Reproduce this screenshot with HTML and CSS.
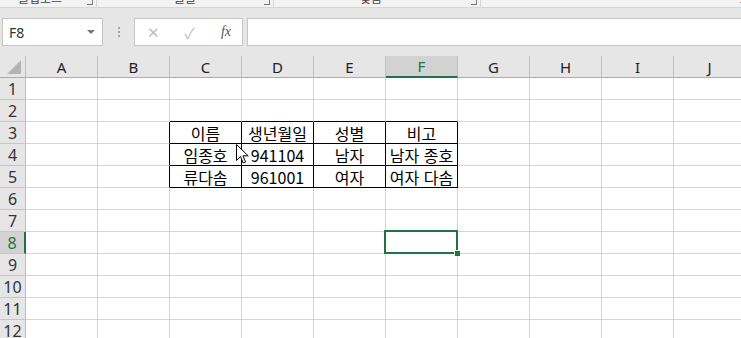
FILE: index.html
```html
<!DOCTYPE html>
<html lang="ko">
<head>
<meta charset="UTF-8">
<title>Excel - Sheet1</title>
<link rel="stylesheet" href="styles.css">
</head>
<body>

<!-- ribbon group labels (cut off at the top of the capture) -->
<div class="ribbon">
    <div class="group g-clip"><span class="glabel">클립보드</span><span class="launch"></span></div>
    <div class="group g-font"><span class="glabel">글꼴</span><span class="launch"></span></div>
    <div class="group g-align"><span class="glabel">맞춤</span><span class="launch"></span></div>
    <div class="group g-num"><span class="glabel">표시 형식</span></div>
</div>

<!-- name box + formula bar -->
<div class="formula-row">
    <div class="namebox">
        <span>F8</span>
        <span class="drop"></span>
    </div>
    <div class="grip"><i></i><i></i><i></i></div>
    <div class="fbuttons">
        <span class="fbtn cancel">✕</span>
        <span class="fbtn ok">✓</span>
        <span class="fbtn fx">fx</span>
    </div>
    <div class="finput"></div>
</div>

<div class="sheet">
    <div class="corner"><span class="tri"></span></div>
    <div class="ch">A</div><div class="ch">B</div><div class="ch">C</div><div class="ch">D</div><div class="ch">E</div>
    <div class="ch sel">F</div><div class="ch">G</div><div class="ch">H</div><div class="ch">I</div><div class="ch">J</div>

    <div class="rh">1</div>
    <div></div><div></div><div></div><div></div><div></div><div></div><div></div><div></div><div></div><div></div>

    <div class="rh">2</div>
    <div></div><div></div><div class="bk-b"></div><div class="bk-b"></div><div class="bk-b"></div><div class="bk-b"></div><div></div><div></div><div></div><div></div>

    <div class="rh">3</div>
    <div></div><div class="bk-r"></div>
    <div class="bk-r bk-b">이름</div><div class="bk-r bk-b">생년월일</div><div class="bk-r bk-b">성별</div><div class="bk-r bk-b">비고</div>
    <div></div><div></div><div></div><div></div>

    <div class="rh">4</div>
    <div></div><div class="bk-r"></div>
    <div class="bk-r bk-b">임종호</div><div class="bk-r bk-b">941104</div><div class="bk-r bk-b">남자</div><div class="bk-r bk-b">남자 종호</div>
    <div></div><div></div><div></div><div></div>

    <div class="rh">5</div>
    <div></div><div class="bk-r"></div>
    <div class="bk-r bk-b">류다솜</div><div class="bk-r bk-b">961001</div><div class="bk-r bk-b">여자</div><div class="bk-r bk-b">여자 다솜</div>
    <div></div><div></div><div></div><div></div>

    <div class="rh">6</div>
    <div></div><div></div><div></div><div></div><div></div><div></div><div></div><div></div><div></div><div></div>

    <div class="rh">7</div>
    <div></div><div></div><div></div><div></div><div></div><div></div><div></div><div></div><div></div><div></div>

    <div class="rh sel">8</div>
    <div></div><div></div><div></div><div></div><div></div>
    <div class="active"><span class="cursor-box"><span class="handle"></span></span></div>
    <div></div><div></div><div></div><div></div>

    <div class="rh">9</div>
    <div></div><div></div><div></div><div></div><div></div><div></div><div></div><div></div><div></div><div></div>

    <div class="rh">10</div>
    <div></div><div></div><div></div><div></div><div></div><div></div><div></div><div></div><div></div><div></div>

    <div class="rh">11</div>
    <div></div><div></div><div></div><div></div><div></div><div></div><div></div><div></div><div></div><div></div>

    <div class="rh">12</div>
    <div></div><div></div><div></div><div></div><div></div><div></div><div></div><div></div><div></div><div></div>

    <!-- mouse pointer -->
    <svg class="pointer" width="13" height="21" viewBox="0 0 13 21">
        <path d="M0.5 0.5 L0.5 16.5 L4.5 12.5 L7.2 19 L9.6 18 L7 11.8 L12.2 11.8 Z" fill="#fff" stroke="#000" stroke-width="1"/>
    </svg>
</div>

</body>
</html>
```

FILE: styles.css
```css
body {
    margin: 0;
    width: 741px;
    height: 338px;
    overflow: hidden;
    background-color: #e6e6e6;
    font-family: "Noto Sans", "Noto Sans CJK KR", sans-serif;
}

/* ribbon strip */
.ribbon {
    display: flex;
    height: 7px;
    overflow: hidden;
    background-color: #f3f3f3;
    border-bottom: 1px solid #d5d5d5;
}
.group {
    position: relative;
    display: flex;
    justify-content: center;
    border-right: 1px solid #d5d5d5;
    height: 7px;
}
.g-clip { width: 97px; padding-right: 16px; box-sizing: border-box; }
.g-font { width: 176px; }
.g-align { width: 207px; padding-right: 12px; box-sizing: border-box; }
.g-num { flex: 1; border-right: none; justify-content: flex-end; }
.glabel {
    font-family: "Noto Sans CJK KR", sans-serif;
    font-size: 12px;
    line-height: 16px;
    margin-top: -10px;
    color: #444;
    white-space: nowrap;
}
.g-num .glabel { margin-right: -46px; }
.launch {
    position: absolute;
    right: 3px;
    top: 0;
    width: 5px;
    height: 4px;
    border-right: 1px solid #777;
    border-bottom: 1px solid #777;
}

/* formula bar */
.formula-row {
    display: flex;
    align-items: center;
    height: 28px;
    padding: 10px 0 10px 2px;
}
.namebox {
    display: flex;
    align-items: center;
    justify-content: space-between;
    padding: 0 7px 0 6px;
    box-sizing: border-box;
    width: 101px;
    height: 28px;
    background-color: #fff;
    border: 1px solid #c6c6c6;
    font-size: 14px;
    color: #333;
}
.drop {
    width: 0;
    height: 0;
    border-left: 4px solid transparent;
    border-right: 4px solid transparent;
    border-top: 4px solid #777;
}
.grip {
    width: 31px;
    display: flex;
    flex-direction: column;
    align-items: center;
    gap: 2px;
}
.grip i {
    width: 2px;
    height: 2px;
    background-color: #a6a6a6;
}
.fbuttons {
    width: 109px;
    height: 28px;
    box-sizing: border-box;
    background-color: #fff;
    border: 1px solid #c6c6c6;
    display: flex;
    align-items: center;
    justify-content: space-between;
    padding: 0 10px 0 12px;
}
.fbtn {
    width: 12px;
    text-align: center;
    font-size: 15px;
    color: #bdbdbd;
}
.fx {
    font-family: "Liberation Serif", serif;
    font-style: italic;
    font-size: 14px;
    color: #555;
}
.finput {
    flex: 1;
    height: 28px;
    box-sizing: border-box;
    margin-left: 4px;
    background-color: #fff;
    border: 1px solid #c6c6c6;
    border-right: none;
}

/* sheet */
.sheet {
    position: relative;
    display: grid;
    grid-template-columns: 26px repeat(10, 72px);
    grid-auto-rows: 22px;
    background-color: #fff;
}
.sheet > div {
    box-sizing: border-box;
    border-right: 1px solid #d4d4d4;
    border-bottom: 1px solid #d4d4d4;
    display: flex;
    align-items: center;
    justify-content: center;
    font-family: "Noto Sans CJK KR", sans-serif;
    font-size: 16px;
    color: #000;
    white-space: nowrap;
}
.sheet > .ch,
.sheet > .rh,
.sheet > .corner {
    background-color: #e6e6e6;
    border-right-color: #bfbfbf;
    border-bottom-color: #ababab;
    font-family: "Noto Sans", sans-serif;
    font-size: 15px;
    color: #222;
}
.sheet > .rh {
    border-bottom-color: #c6c6c6;
    font-size: 16px;
    color: #333;
}
.sheet > .ch.sel {
    background-color: #d2d2d2;
    border-bottom: 2px solid #217346;
    color: #217346;
}
.sheet > .rh.sel {
    background-color: #d2d2d2;
    border-right: 2px solid #217346;
    color: #217346;
}
.corner {
    position: relative;
}
.tri {
    position: absolute;
    right: 4px;
    bottom: 3px;
    width: 0;
    height: 0;
    border-left: 14px solid transparent;
    border-bottom: 14px solid #b4b4b4;
}
.sheet > .bk-r { border-right-color: #000; }
.sheet > .bk-b { border-bottom-color: #000; }

/* active cell F8 */
.active {
    position: relative;
}
.cursor-box {
    position: absolute;
    left: -2px;
    top: -2px;
    width: 74px;
    height: 24px;
    box-sizing: border-box;
    border: 2px solid #217346;
}
.handle {
    position: absolute;
    right: -4px;
    bottom: -4px;
    width: 5px;
    height: 5px;
    background-color: #217346;
    border-left: 1px solid #fff;
    border-top: 1px solid #fff;
}
.pointer {
    position: absolute;
    left: 236px;
    top: 88px;
}
```
